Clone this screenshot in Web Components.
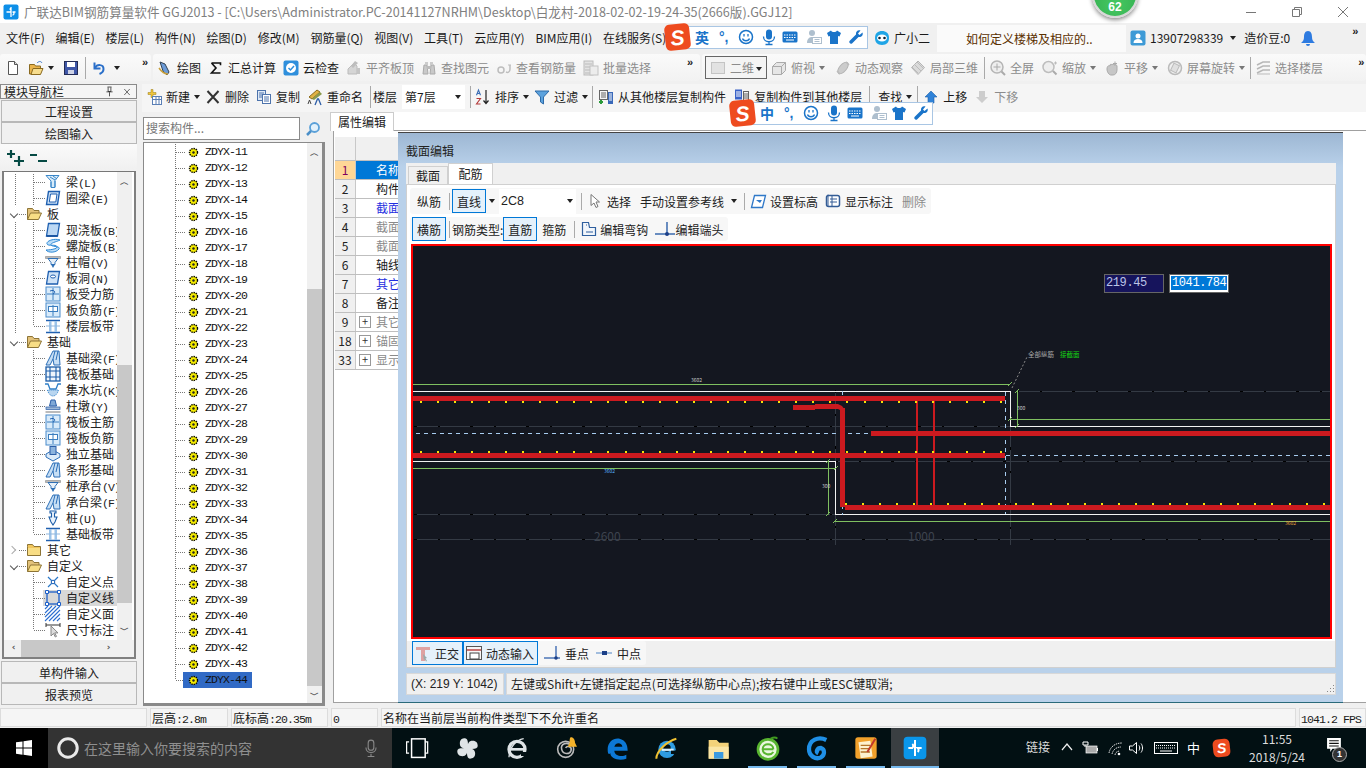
<!DOCTYPE html>
<html lang="zh">
<head>
<meta charset="utf-8">
<title>GGJ2013</title>
<style>
    html, body { margin: 0; padding: 0; }
    body { width: 1366px; height: 768px; overflow: hidden; font: 12px "Noto Sans CJK SC", "Liberation Sans", sans-serif; color: #1a1a1a; }
</style>
</head>
<body>
<gl-app>
    <gl-titlebar slot="title">广联达BIM钢筋算量软件 GGJ2013 - [C:\Users\Administrator.PC-20141127NRHM\Desktop\白龙村-2018-02-02-19-24-35(2666版).GGJ12]</gl-titlebar>

    <gl-menubar slot="menu"></gl-menubar>

    <gl-band slot="tools">
        <gl-group style="width:151px">
            <gl-tool icon="doc" style="margin-left:5px"></gl-tool>
            <gl-tool icon="open" arrow style="margin-left:7px"></gl-tool>
            <gl-tool icon="save" style="margin-left:9px"></gl-tool>
            <gl-sep style="margin-left:6px"></gl-sep>
            <gl-tool icon="undo" arrow style="margin-left:5px;--am:3px"></gl-tool>
            <gl-more style="margin-left:22px"></gl-more>
        </gl-group>
        <gl-group style="width:547px">
            <gl-tool icon="draw" style="margin-left:4px">绘图</gl-tool>
            <gl-tool icon="sigma" style="margin-left:7px">汇总计算</gl-tool>
            <gl-tool icon="cloud" style="margin-left:7px">云检查</gl-tool>
            <gl-tool icon="flat" dim style="margin-left:7px">平齐板顶</gl-tool>
            <gl-tool icon="binoc" dim style="margin-left:7px">查找图元</gl-tool>
            <gl-tool icon="glass" dim style="margin-left:7px">查看钢筋量</gl-tool>
            <gl-tool icon="batch" dim style="margin-left:7px">批量选择</gl-tool>
            <gl-more style="margin-left:36px"></gl-more>
        </gl-group>
        <gl-group style="flex:1">
            <gl-combo dim style="margin-left:3px;width:62px;border:1px solid #666;height:23px"><gl-icon name="square" style="margin:0 4px 0 2px"></gl-icon>二维</gl-combo>
            <gl-tool icon="cube" dim arrow style="margin-left:4px">俯视</gl-tool>
            <gl-tool icon="orbit" dim style="margin-left:10px">动态观察</gl-tool>
            <gl-tool icon="part" dim style="margin-left:7px">局部三维</gl-tool>
            <gl-sep style="margin-left:6px"></gl-sep>
            <gl-tool icon="full" dim style="margin-left:5px">全屏</gl-tool>
            <gl-tool icon="zoomin" dim arrow style="margin-left:8px">缩放</gl-tool>
            <gl-tool icon="pan" dim arrow style="margin-left:8px">平移</gl-tool>
            <gl-tool icon="rotate" dim arrow style="margin-left:9px">屏幕旋转</gl-tool>
            <gl-sep style="margin-left:5px"></gl-sep>
            <gl-tool icon="layers" dim style="margin-left:4px">选择楼层</gl-tool>
            <gl-more style="margin-left:35px"></gl-more>
        </gl-group>
    </gl-band>

    <gl-nav slot="nav">
        <gl-tree-row v1 v2 icon="t-beam">梁<b>(L)</b></gl-tree-row>
        <gl-tree-row v1 v2 icon="t-ring">圈梁<b>(E)</b></gl-tree-row>
        <gl-tree-row folder open>板</gl-tree-row>
        <gl-tree-row v1 v2 icon="t-slab">现浇板<b>(B)</b></gl-tree-row>
        <gl-tree-row v1 v2 icon="t-spiral">螺旋板<b>(B)</b></gl-tree-row>
        <gl-tree-row v1 v2 icon="t-cap">柱帽<b>(V)</b></gl-tree-row>
        <gl-tree-row v1 v2 icon="t-hole">板洞<b>(N)</b></gl-tree-row>
        <gl-tree-row v1 v2 icon="t-force">板受力筋</gl-tree-row>
        <gl-tree-row v1 v2 icon="t-neg">板负筋<b>(F)</b></gl-tree-row>
        <gl-tree-row v1 v2 last icon="t-strip">楼层板带</gl-tree-row>
        <gl-tree-row folder open>基础</gl-tree-row>
        <gl-tree-row v2 icon="t-fbeam">基础梁<b>(F)</b></gl-tree-row>
        <gl-tree-row v2 icon="t-raft">筏板基础</gl-tree-row>
        <gl-tree-row v2 icon="t-pit">集水坑<b>(K)</b></gl-tree-row>
        <gl-tree-row v2 icon="t-pier">柱墩<b>(Y)</b></gl-tree-row>
        <gl-tree-row v2 icon="t-force">筏板主筋</gl-tree-row>
        <gl-tree-row v2 icon="t-neg">筏板负筋</gl-tree-row>
        <gl-tree-row v2 icon="t-iso">独立基础</gl-tree-row>
        <gl-tree-row v2 icon="t-fbeam">条形基础</gl-tree-row>
        <gl-tree-row v2 icon="t-cap">桩承台<b>(V)</b></gl-tree-row>
        <gl-tree-row v2 icon="t-fbeam">承台梁<b>(F)</b></gl-tree-row>
        <gl-tree-row v2 icon="t-pile">桩<b>(U)</b></gl-tree-row>
        <gl-tree-row v2 last icon="t-strip">基础板带</gl-tree-row>
        <gl-tree-row folder>其它</gl-tree-row>
        <gl-tree-row folder open>自定义</gl-tree-row>
        <gl-tree-row v2 icon="t-point">自定义点</gl-tree-row>
        <gl-tree-row v2 selected icon="t-line">自定义线</gl-tree-row>
        <gl-tree-row v2 icon="t-face">自定义面</gl-tree-row>
        <gl-tree-row v2 last icon="t-dim">尺寸标注</gl-tree-row>
    </gl-nav>

    <gl-band slot="tools2" second>
        <gl-tool icon="new" arrow style="margin-left:4px">新建</gl-tool>
        <gl-tool icon="del" style="margin-left:5px">删除</gl-tool>
        <gl-tool icon="copy" style="margin-left:7px">复制</gl-tool>
        <gl-tool icon="rename" style="margin-left:7px">重命名</gl-tool>
        <gl-sep style="margin-left:7px"></gl-sep>
        <span style="margin-left:2px">楼层</span>
        <gl-combo style="margin-left:5px;width:63px;background:#fff;padding-left:3px">第7层</gl-combo>
        <gl-sep style="margin-left:5px"></gl-sep>
        <gl-tool icon="sort" arrow style="margin-left:4px">排序</gl-tool>
        <gl-tool icon="filter" arrow style="margin-left:5px">过滤</gl-tool>
        <gl-sep style="margin-left:4px"></gl-sep>
        <gl-tool icon="from" style="margin-left:5px">从其他楼层复制构件</gl-tool>
        <gl-tool icon="to" style="margin-left:8px">复制构件到其他楼层</gl-tool>
        <gl-sep style="margin-left:7px"></gl-sep>
        <gl-tool arrow style="margin-left:8px">查找</gl-tool>
        <gl-sep style="margin-left:5px"></gl-sep>
        <gl-tool icon="up" style="margin-left:5px">上移</gl-tool>
        <gl-tool icon="down" dim style="margin-left:7px">下移</gl-tool>
    </gl-band>

    <gl-list slot="list"></gl-list>
    <gl-props slot="props"></gl-props>

    <gl-status slot="status"></gl-status>
    <gl-taskbar slot="task"></gl-taskbar>

    <gl-dialog slot="over"></gl-dialog>
    <gl-ime slot="over" mode="英" style="left:665px;top:24px"></gl-ime>
    <gl-ime slot="over" mode="中" style="left:730px;top:100px"></gl-ime>
    <gl-score slot="over">62</gl-score>
</gl-app>

<script>
// shorthand, every element is the same shape: styles + markup in an open root
function define(name, css, html, init) {
    let template = document.createElement('template');
    template.innerHTML = `<style>${css}</style>${html}`;
    customElements.define(name, class extends HTMLElement {
        constructor() {
            super();
            this.attachShadow({ mode: 'open' });
            this.shadowRoot.appendChild(template.content.cloneNode(true));
        }
        connectedCallback() {
            if (init && !this.done) {
                this.done = true;
                init.call(this, this.shadowRoot);
            }
        }
    });
}

const ICONS = {
    doc: '<path d="M3.5 1.5h6l3 3v10h-9z" fill="#fff" stroke="#555"/><path d="M9.5 1.5v3h3" fill="#ddd" stroke="#555"/>',
    open: '<path d="M1.5 4.5h5l1 1.5h5v8h-11z" fill="#e9b44c" stroke="#8a6a20"/><path d="M3 14.5l2-6h10l-2.500 6z" fill="#f7dd8e" stroke="#8a6a20"/><path d="M9 3c2-2 4-2 5 0" fill="none" stroke="#3a77c8"/>',
    save: '<rect x="1.500" y="1.500" width="13" height="13" fill="#3f57a8" stroke="#232b55"/><rect x="4" y="2" width="8" height="5" fill="#fff"/><rect x="5" y="10" width="6" height="4" fill="#ced3e6"/>',
    undo: '<path d="M3.500 2.500v6h6" fill="none" stroke="#2a6fc9" stroke-width="2"/><path d="M4 8c2-4 8.500-4 8.500 1 0 2-1.500 4-4 5" fill="none" stroke="#2a6fc9" stroke-width="2"/>',
    draw: '<path d="M3 2l5 2 4 8-2 3-4-4z" fill="#6c9bd8" stroke="#345"/><path d="M2 8c2 3 5 6 9 6" fill="none" stroke="#c9a03c" stroke-width="1.500"/>',
    sigma: '<path d="M3.500 3h9v2.200M12.500 13h-9l4.500-5-4.500-5" fill="none" stroke="#111" stroke-width="1.600"/>',
    cloud: '<rect x="0.500" y="0.500" width="15" height="15" rx="2" fill="#2f8fdc"/><circle cx="8" cy="8" r="5" fill="#fff"/><path d="M5.500 8l2 2 3.500-4" fill="none" stroke="#2f8fdc" stroke-width="1.500"/>',
    flat: '<path d="M2 14V9l6-6 3 3v8z" fill="#d5d5d5" stroke="#bbb"/><path d="M11 14V8h3v6z" fill="#c4c4c4"/><path d="M9 1l3 2-5 5-2-2z" fill="#bdbdbd"/>',
    binoc: '<path d="M2 14l1-9h3l1 9zM9 14l1-9h3l1 9z" fill="#c9c9c9" stroke="#aaa"/><rect x="6" y="6" width="4" height="3" fill="#bbb"/><rect x="4" y="2" width="3" height="3" fill="#ccc"/><rect x="9" y="2" width="3" height="3" fill="#ccc"/>',
    glass: '<circle cx="5" cy="10" r="3" fill="none" stroke="#bdbdbd" stroke-width="1.500"/><path d="M10 12c2 1 4 0 4-3V5" fill="none" stroke="#bdbdbd" stroke-width="1.500"/><path d="M12 5h3" stroke="#bdbdbd"/>',
    batch: '<rect x="1" y="1" width="9" height="14" fill="#e3e3e3" stroke="#bbb"/><path d="M2 4h7M2 7h7M2 10h7M2 13h7" stroke="#bbb"/><rect x="7" y="6" width="8" height="9" fill="#ececec" stroke="#c2c2c2"/>',
    square: '<rect x="1.500" y="2.500" width="13" height="11" fill="#e2e2e2" stroke="#c4c4c4"/>',
    cube: '<path d="M1.500 6.500l4-4h9v8l-4 4h-9z" fill="#e6e6e6" stroke="#aaa"/><path d="M1.500 6.500h9v8M10.500 6.500l4-4" fill="none" stroke="#aaa"/>',
    orbit: '<ellipse cx="8" cy="8" rx="3.500" ry="7" transform="rotate(40 8 8)" fill="#ccc" stroke="#b4b4b4"/><path d="M2 11l3 3M11 2l3 3" stroke="#bbb" stroke-width="1.500"/>',
    part: '<path d="M8 1l6.500 6.500-6.500 7-6.500-7z" fill="#dadada" stroke="#b5b5b5"/><path d="M4 4l7 7M7 2l6 6M2 7l6 6" stroke="#bbb"/>',
    full: '<circle cx="7" cy="7" r="6" fill="#eee" stroke="#b5b5b5" stroke-width="1.500"/><path d="M7 3.500v7M3.500 7h7" stroke="#aaa"/><path d="M11.500 11.500l3.500 3.500" stroke="#aaa" stroke-width="2"/>',
    zoomin: '<circle cx="6.500" cy="7" r="5.500" fill="#eee" stroke="#bdbdbd" stroke-width="1.500"/><path d="M11 11l3.500 3.500" stroke="#aaa" stroke-width="2"/><path d="M12 3h3M13.500 1.500v3" stroke="#bbb"/>',
    pan: '<path d="M3 9c0-3 2-4 3-3V5c0-1 2-1 2 0 0-1 2-1 2 0 1-1 3 0 3 1v4c0 3-2 5-4 5H7c-2 0-4-3-4-6z" fill="#c6c6c6" stroke="#aaa"/><path d="M11 1.500v4M9 3.500h4" stroke="#aaa"/>',
    rotate: '<circle cx="8" cy="8" r="6.500" fill="#f0f0f0" stroke="#bbb" stroke-width="1.500"/><rect x="5" y="4" width="6" height="8" fill="#e0e0e0" stroke="#bbb" transform="rotate(25 8 8)"/>',
    layers: '<path d="M2 5l6-3h7M2 9l6-3h7M2 13l6-3h7" fill="none" stroke="#b7b7b7" stroke-width="1.500"/><path d="M2 14h13" stroke="#bbb"/>',
    new: '<path d="M5 0.500h2v3h3v2H7v3H5V5.500H2v-2h3z" fill="#f0c63c" stroke="#987a16" stroke-width=".5"/><rect x="6.500" y="7.500" width="9" height="8" fill="#fff" stroke="#5a7fb5"/><path d="M7 10.500h8M10 8v7M13 8v7" stroke="#5a7fb5"/>',
    del: '<path d="M2.500 2l11 12M13.500 2l-11 12" stroke="#333" stroke-width="2"/>',
    copy: '<rect x="1.500" y="1.500" width="8" height="10" fill="#dfe9f6" stroke="#4d73ac"/><path d="M3 4h5M3 6h5M3 8h5" stroke="#4d73ac"/><rect x="6.500" y="5.500" width="8" height="9" fill="#fff" stroke="#4d73ac"/><path d="M8 8h5M8 10h5M8 12h5" stroke="#4d73ac"/>',
    rename: '<path d="M2 8l8-7 3 2-8 7z" fill="#e0b243" stroke="#8b6a1a"/><path d="M5 10l8-7 2 2-8 6z" fill="#8a9a4c"/><path d="M8 16l2.500-6h1l2.500 6" fill="none" stroke="#2f5fa8" stroke-width="1.300"/><path d="M1 15l1.500-4 1.500 4" fill="none" stroke="#444"/>',
    sort: '<path d="M1.500 6.200L3.500 1l2 5.200M2.200 4.500h2.600" fill="none" stroke="#3a6db5" stroke-width="1.100"/><path d="M1.500 9.500h4l-4 5.500h4" fill="none" stroke="#b33a3a" stroke-width="1.100"/><path d="M11 1v13M8.500 11.500l2.500 3 2.500-3" fill="none" stroke="#222" stroke-width="1.200"/>',
    filter: '<path d="M1 2h14l-5.500 6v7l-3-2V8z" fill="#5ca2dd" stroke="#2d6aa8"/>',
    from: '<rect x="1.500" y="1.500" width="8" height="9" fill="#f5f5f5" stroke="#666"/><path d="M3 4h5M3 6h5M3 8h5" stroke="#666"/><path d="M3 11v4M1 13h4" stroke="#2c9a3b" stroke-width="2"/><rect x="10" y="3" width="5" height="12" fill="#3968b9"/><path d="M11 5h3M11 7h3M11 9h3M11 11h3" stroke="#fff"/>',
    to: '<rect x="1" y="0.500" width="7" height="10" fill="#3a63c8"/><path d="M2 3h5M2 5h5M2 7h5" stroke="#fff"/><rect x="9.500" y="2.500" width="5" height="9" fill="#f4f4f4" stroke="#666"/><path d="M10 5h4M10 7h4M10 9h4" stroke="#666"/>',
    up: '<path d="M8 2l6 6h-3v6H5V8H2z" fill="#2f82d8" stroke="#1d5fa8" stroke-width=".6"/>',
    down: '<path d="M8 14l-6-6h3V2h6v6h3z" fill="#cdcdcd"/>',
    cursor: '<path d="M4 1.500v11l3-2.500 2 4.500 2-1-2-4.500h3.500z" fill="#fff" stroke="#777"/>',
    slope: '<path d="M1.500 14.500l3-12h11l-3 12z" fill="#fff" stroke="#2f78c8" stroke-width="1.300"/><path d="M6 7h6l-2 3z" fill="#2f78c8"/>',
    note: '<rect x="1.500" y="2.500" width="13" height="11" rx="2" fill="#fff" stroke="#345d96" stroke-width="1.500"/><path d="M3 1.500v12M7 3v10" stroke="#345d96"/><path d="M5 6h7M5 9h7" stroke="#345d96"/>',
    hook: '<path d="M1.500 14.500v-13h6l1 5h6v8z" fill="#f2f6fb" stroke="#2f5f9e" stroke-width="1.200"/><path d="M5 4h1M5 11h7" stroke="#2f5f9e"/>',
    end: '<path d="M0 13h20" stroke="#2c5fa8" stroke-width="1.400"/><path d="M12 1v12" stroke="#2c5fa8" stroke-width="1.400"/><circle cx="12" cy="13" r="2" fill="#1c3f88"/>',
    perp: '<path d="M0 13h16" stroke="#3f6cb2" stroke-width="1.400"/><path d="M12 1v12" stroke="#3f6cb2" stroke-width="1.400"/><circle cx="12" cy="13" r="1.800" fill="#1c3f88"/>',
    mid: '<path d="M0 8h16" stroke="#8daed8" stroke-width="1.600"/><rect x="6" y="6" width="5" height="4" fill="#1c3f88"/>',
    ortho: '<path d="M1 2h14v3H10v11H6V5H1z" fill="#dfa2a2"/><path d="M8 9l4 4-1.500.5L12 16l-1 .5-1.200-2.300L9 15z" fill="#9aa"/>',
    dyn: '<rect x="0.500" y="1.500" width="15" height="13" fill="#f7f7f7" stroke="#555"/><path d="M1 5h14" stroke="#c87070" stroke-width="2"/><rect x="4" y="8" width="9" height="6" fill="#fff" stroke="#444"/>',
    gear: '<circle cx="5.500" cy="5.500" r="4" fill="#f7ee00" stroke="#000" stroke-dasharray="1.400 .9" stroke-width="1.400"/><circle cx="5.500" cy="5.500" r="1.200" fill="#222"/>',
    search: '<circle cx="9.500" cy="6.500" r="4.500" fill="#e3f1fb" stroke="#5aa0d8" stroke-width="1.800"/><path d="M6 10l-4 4" stroke="#4a8fc8" stroke-width="2.500"/>',
    folder: '<path d="M1.500 4.500v-2h5l1.500 2h6.500v9h-13z" fill="#f0c55c" stroke="#8d7436"/><path d="M2 6h12v7H2z" fill="#f8dd85"/>',
    folderopen: '<path d="M1.500 13.500v-11h5l1.500 2h5v3" fill="#e3c27a" stroke="#8d7436"/><path d="M1.500 13.500l3-6.500h11l-3 6.500z" fill="#f8dd85" stroke="#8d7436"/>',
    't-beam': '<path d="M1 1.500h13l-4 5v7H6V7z" fill="#d9ecfa" stroke="#3a87c9"/><path d="M5 3l5 3M8 2l4 3M6 8v5M10 7v6" stroke="#3a87c9"/>',
    't-ring': '<path d="M3.500 1.500h11l-2 13H1.500z" fill="#cfe3f7" stroke="#1e5fb0" stroke-width="1.400"/><path d="M5.500 4h6.500l-1.200 8H4.300z" fill="#fff" stroke="#1e5fb0"/>',
    't-slab': '<path d="M3.500 1.500h11l-2 12.500H1.500z" fill="#bcd8f4" stroke="#1e5fb0" stroke-width="1.300"/><path d="M1.500 14h11" stroke="#0f4a98" stroke-width="1.500"/>',
    't-spiral': '<path d="M15 2C9 0 1 3 2 6c1 2.500 9 0 10 2.500S5 12 1 12c2 3 10 3 13-1 2-3-7-2-8-4s5-3 9-5z" fill="#b9dcf8" stroke="#2f8ad6"/>',
    't-cap': '<path d="M0.500 2.500h15v2h-15z" fill="#bbb" stroke="#888" stroke-width=".6"/><path d="M3 4.500h10l-3 4v2H6v-2z" fill="#e6eff8" stroke="#2d6fb5"/><path d="M6 10.500h4L8 14z" fill="#2d6fb5"/>',
    't-hole': '<path d="M3.500 1.500h11l-2 12.500H1.500z" fill="#cfe3f7" stroke="#1e5fb0" stroke-width="1.300"/><ellipse cx="8" cy="6.500" rx="2.500" ry="1.500" fill="#fff" stroke="#1e5fb0"/>',
    't-force': '<rect x="1" y="1" width="14" height="14" fill="#d9ebfa" stroke="#4a8ccb"/><path d="M8 2v12M2 8h12" stroke="#3b7ec0"/><path d="M5 5c5-2 6 2 3 3" fill="none" stroke="#1e5fb0"/>',
    't-neg': '<rect x="1" y="1" width="14" height="14" fill="#d9ebfa" stroke="#4a8ccb"/><rect x="3.500" y="4.500" width="9" height="5" fill="#fff" stroke="#3b7ec0"/><path d="M8 3v11" stroke="#3b7ec0"/>',
    't-strip': '<path d="M1 2.500h14M1 14.500h14" stroke="#2060b0" stroke-width="1.400"/><rect x="4" y="3" width="2.500" height="11" fill="#9cc4ea"/><rect x="9.500" y="3" width="2.500" height="11" fill="#9cc4ea"/><path d="M1 8h14" stroke="#8fb6dd"/>',
    't-fbeam': '<path d="M8 1L14 1l1 14H9L8 9l-3 6H1z" fill="#c7dff5" stroke="#2c6fb8"/><path d="M10 1l-2 8M13 1l-2 9" stroke="#2c6fb8"/>',
    't-raft': '<rect x="1" y="1" width="14" height="14" fill="#eef5fc" stroke="#1c5da8" stroke-width="1.300"/><path d="M1 5h14M1 11h14M5 1v14M11 1v14" stroke="#1c5da8" stroke-width="1.100"/>',
    't-pit': '<path d="M0 2h3l2 5h6l2-5h3" fill="none" stroke="#2f7fc8" stroke-width="1.300"/><path d="M2.500 8c2 8 9 8 11 0z" fill="#b9d6f0" stroke="#2f7fc8" stroke-dasharray="1 1"/>',
    't-pier': '<path d="M6 2h4l1.500 6h-7z" fill="#7fa8d6" stroke="#2c5fa8"/><rect x="1" y="9" width="14" height="2.500" fill="#9db8d8" stroke="#2c5fa8" stroke-width=".7"/><rect x="0.500" y="13" width="15" height="2" fill="#bbb"/>',
    't-iso': '<path d="M1 8l7-4 7 4v3l-7 4-7-4z" fill="#dcebf9" stroke="#2c6fb8"/><rect x="5" y="0.500" width="6" height="8" fill="#8cb4de" stroke="#2c5fa8"/>',
    't-pile': '<path d="M5 1h6v2H9.500v4H12l-2 5-2 3-2-3-2-5h2.500V3H5z" fill="#e9f2fb" stroke="#1c5da8" stroke-width="1.100"/>',
    't-point': '<path d="M3 3l10 10M13 3L3 13" stroke="#2a78c8" stroke-width="1.200"/><circle cx="8" cy="8" r="1.800" fill="#fff" stroke="#1a5eb5"/>',
    't-line': '<rect x="2" y="2" width="12" height="12" fill="none" stroke="#1c5fc8" stroke-width="1.300"/><path d="M.5.500h3v3h-3zM12.500.500h3v3h-3zM.5 12.500h3v3h-3zM12.500 12.500h3v3h-3z" fill="#fff" stroke="#1c5fc8"/>',
    't-face': '<path d="M0 7L7 0M0 11L11 0M0 15L15 0M4 15L15 4M8 15l7-7M12 15l3-3M0 3l3-3" stroke="#2c6fd0" stroke-width="1.100"/>',
    't-dim': '<path d="M1 1v4M15 1v4M1 3h14" stroke="#333"/><path d="M6 4v10l2.500-2.500 1.800 3.500 1.200-.6-1.800-3.500H13z" fill="#ddd" stroke="#888"/>',
    win: '<path d="M0 2.300l6.500-.9v6.200H0zM7.500 1.300L16 0v7.600H7.500zM0 8.500h6.500v6.200L0 13.800zM7.500 8.500H16V16l-8.500-1.200z" fill="#fff"/>',
    cortana: '<circle cx="8" cy="8" r="6.700" fill="none" stroke="#e9e9e9" stroke-width="2.200"/>',
    mic: '<rect x="5.500" y="1" width="5" height="9" rx="2.500" fill="none" stroke="#888"/><path d="M3.500 7.500c0 6 9 6 9 0M8 13v2.500M5 15.500h6" fill="none" stroke="#888"/>',
    taskview: '<rect x="4.500" y="1.500" width="11" height="15" fill="none" stroke="#fff" stroke-width="1.200" transform="scale(.9)"/><path d="M2.500 4H0.500v9h2M15.500 4h2v9h-2" fill="none" stroke="#fff" transform="scale(.9)"/>',
    fan: '<path d="M9 9C5 9 3 8 3 5s2-4 4-4 3 3 2 8zM9 9c0-4 1-6 4-6s4 2 4 4-3 3-8 2zM9 9c4 0 6 1 6 4s-2 4-4 4-3-3-2-8zM9 9c0 4-1 6-4 6s-4-2-4-4 3-3 8-2z" fill="#dfe4e6"/>',
    ie: '<circle cx="9" cy="10" r="6" fill="none" stroke="#dfe4e6" stroke-width="2.500"/><path d="M3 10h12" stroke="#dfe4e6" stroke-width="2"/><path d="M14 2C8 3 3 9 3 16" fill="none" stroke="#dfe4e6"/><path d="M12 12h5v3h-5z" fill="#021013"/>',
    swirl: '<circle cx="8" cy="10" r="6" fill="none" stroke="#bbb" stroke-width="1.200"/><path d="M12 7c-3-3-8-1-7 3s6 4 7 1-3-4-4-2" fill="none" stroke="#bbb" stroke-width="1.200"/><path d="M12 1c2 0 3 2 3 4l1.500 3H9.500L11 5c0-2 0-4 1-4z" fill="#f4b22a"/>',
    edge: '<path d="M2 10C2 4 7 1 11 2c4 1 6 4 6 9H7c0 4 6 5 9 3v3c-5 2-12 0-12-4-1 1-2 1-2-3zM7 8h6c0-3-5-4-6 0z" fill="#0c78d6"/>',
    iec: '<circle cx="9" cy="10" r="6.500" fill="#2f9ce0"/><circle cx="9" cy="9" r="2.800" fill="#021013"/><rect x="5" y="9.500" width="9" height="1.700" fill="#d5edfb"/><rect x="12" y="11" width="5" height="2.500" fill="#021013"/><path d="M1 17c0-6 8-13 15-15" fill="none" stroke="#f1c232" stroke-width="1.500"/>',
    explorer: '<path d="M2 3h6l2 2h7v12H2z" fill="#f3d27a"/><path d="M2 8h15v9H2z" fill="#fbe6a6"/><rect x="6" y="12" width="7" height="5" fill="#3b9ae0"/>',
    greenie: '<circle cx="9" cy="10" r="7.500" fill="#eaf7df" stroke="#58b530" stroke-width="2"/><path d="M5 10h8M5 10c0-5 8-5 8 0M5 10c0 4 6 5 8 2" fill="none" stroke="#58b530" stroke-width="1.500"/><path d="M11 2c2-1 4-1 5 0" stroke="#3f9a20" fill="none" stroke-width="1.500"/>',
    glodon: '<path d="M16 3C10 0 3 3 3 10c0 5 5 8 9 6 3-2 3-6 0-7-3 0-4 3-2 4" fill="none" stroke="#1f8fe6" stroke-width="3.200"/>',
    notes: '<rect x="1" y="1" width="16" height="16" rx="2" fill="#f2a12b"/><rect x="4" y="4" width="9" height="12" fill="#fdf1cf" transform="rotate(-8 9 9)"/><path d="M5 7h7M5 9.500h7M5 12h7" stroke="#b5752a"/><path d="M10 12l6-10" stroke="#c0392b" stroke-width="1.500"/>',
    glodonapp: '<rect x="0.500" y="0.500" width="17" height="17" rx="3" fill="#0a96ea"/><path d="M9 3v12M4 9h3a2 2 0 0 0 0-3M14 9h-3a2 2 0 0 1 0 3" fill="none" stroke="#fff" stroke-width="1.500"/>',
    battery: '<path d="M1 2h5v3H1zM3 5v2" fill="none" stroke="#fff"/><rect x="4" y="6" width="11" height="7" fill="#aaa" stroke="#fff" stroke-width=".7"/><rect x="15" y="8" width="1" height="3" fill="#fff"/>',
    wifi: '<path d="M1 13C2 7 7 3 14 3M4 14c1-4 4-7 9-7M7 15c0-2 2-4 5-4" fill="none" stroke="#d8d8d8" stroke-dasharray="1.500 .8"/><circle cx="11" cy="14" r="1.300" fill="#fff"/>',
    speaker: '<path d="M1.500 6h3l4-3.500v11l-4-3.500h-3z" fill="none" stroke="#fff"/><path d="M11 5.500c1 1.500 1 3.500 0 5M13 3.500c2 2.500 2 6.500 0 9" fill="none" stroke="#fff"/>',
    kbd: '<rect x="0.500" y="2.500" width="23" height="11" fill="none" stroke="#fff"/><path d="M2 5.500h20M2 8h20" stroke="#fff" stroke-dasharray="1 1"/><path d="M6 11h12" stroke="#fff"/>',
    actions: '<path d="M1 1h13v10H6l-2 3v-3H1z" fill="#fff"/><path d="M3 3.500h9M3 6h9M3 8.500h9" stroke="#111"/>',
    smile: '<circle cx="8" cy="8" r="6.500" fill="#fff" stroke="#1a74c9" stroke-width="1.500"/><path d="M4.500 9.500c1 3 6 3 7 0" fill="none" stroke="#1a74c9" stroke-width="1.300"/><path d="M6 5v2.500M10 5v2.500" stroke="#1a74c9" stroke-width="1.300"/>',
    vmic: '<rect x="5" y="0.500" width="6" height="10" rx="3" fill="#1a74c9"/><path d="M2.500 7.500c0 7 11 7 11 0M8 13v2.500M4.500 15.500h7" fill="none" stroke="#1a74c9" stroke-width="1.300"/>',
    keys: '<rect x="0.500" y="2.500" width="15" height="11" rx="1.500" fill="#1a74c9"/><path d="M2 6h12M2 8.500h12" stroke="#fff" stroke-dasharray="1.500 1"/><path d="M4 11h8" stroke="#fff"/>',
    card: '<circle cx="6" cy="4" r="3" fill="#aebfce"/><path d="M1 14c0-5 3-6 5-6h4v6z" fill="#aebfce"/><rect x="6.500" y="8.500" width="9" height="6" fill="#fff" stroke="#aebfce"/><path d="M8.500 10.500h5M8.500 12.500h5" stroke="#aebfce"/>',
    shirt: '<path d="M5 1.500L1 4l1.500 3.500L4 7v8h8V7l1.500.5L15 4l-4-2.500C10 3.500 6 3.500 5 1.500z" fill="#1a74c9"/>',
    wrench: '<path d="M14.500 3.500L11.500 6 10 4.500l2.500-3C10 .5 7.500 2.500 8 5.500L1.500 12c-1 1.500 1 3.500 2.500 2.500L10.500 8c3 .5 5-2 4-4.500z" fill="#1a74c9"/>',
    avatar: '<rect x="0.500" y="0.500" width="15" height="15" rx="2" fill="#3d9ad6"/><circle cx="8" cy="6" r="2.500" fill="#fff"/><path d="M3.500 13c0-3 2-4 4.500-4s4.500 1 4.500 4z" fill="#fff"/>',
    bell: '<path d="M8 1c3 0 4 3 4 6s1 4 3 6H1c2-2 3-3 3-6s1-6 4-6z" fill="#2e7be0"/><path d="M6 14h4a2 2 0 0 1-4 0z" fill="#2e7be0"/>',
    robot: '<path d="M8 1c4 0 7 2 7 7 0 4-2 7-7 7s-7-3-7-7c0-5 3-7 7-7z" fill="#1fa5e6"/><ellipse cx="8" cy="8" rx="5" ry="3.500" fill="#fff"/><circle cx="5.500" cy="8" r="1.300" fill="#123"/><circle cx="10.500" cy="8" r="1.300" fill="#123"/>',
    pin: '<path d="M5 1.500h6M6 2v6h4V2M3.500 8.500h9M8 9v6" fill="none" stroke="#222" stroke-width="1.100"/>',
    glapp: '<rect x="0.500" y="0.500" width="15" height="15" rx="2" fill="#0d8fe8"/><path d="M8 3v10M3.500 8h3a1.500 1.500 0 0 0 0-3M12.500 8h-3a1.500 1.500 0 0 1 0 3" fill="none" stroke="#fff" stroke-width="1.300"/>'
};

define('gl-icon', ':host{display:inline-block;width:16px;height:16px;flex:none;line-height:0} svg{width:100%;height:100%;overflow:visible}', '<svg viewBox="0 0 16 16"></svg>', function (root) {
    let svg = root.querySelector('svg');
    let box = this.getAttribute('box');
    if (box) svg.setAttribute('viewBox', box);
    svg.innerHTML = ICONS[this.getAttribute('name')] || '';
});

define('gl-app', `
    :host{display:grid;position:relative;width:1366px;height:768px;overflow:hidden;background:#f0f0f0;
        grid-template-columns:137px 1fr;grid-template-rows:23px 31px 27px 3px 28px 594px 22px 40px}
    .a{grid-column:1/3} .t1{grid-column:1/3;grid-row:3}
    .nav{grid-row:5/7;grid-column:1}
    .t2{grid-row:5;grid-column:2;padding-left:5px}
    .work{grid-row:6;grid-column:2;display:flex;padding-left:5px;min-width:0}
    .s{grid-column:1/3;grid-row:7} .k{grid-column:1/3;grid-row:8}
`, `
    <div class="a" style="grid-row:1"><slot name="title"></slot></div>
    <div class="a" style="grid-row:2"><slot name="menu"></slot></div>
    <div class="t1"><slot name="tools"></slot></div>
    <div class="nav"><slot name="nav"></slot></div>
    <div class="t2"><slot name="tools2"></slot></div>
    <div class="work"><slot name="list"></slot><slot name="props"></slot></div>
    <div class="s"><slot name="status"></slot></div>
    <div class="k"><slot name="task"></slot></div>
    <slot name="over"></slot>
`);

define('gl-titlebar', `
    :host{display:flex;align-items:center;height:23px;background:#fff;color:#808080;font-size:12.600px;white-space:nowrap}
    gl-icon{margin:0 5px 0 3px}
    .text{flex:1;overflow:hidden}
    .c{width:46px;height:23px;display:flex;align-items:center;justify-content:center}
    svg{width:10px;height:10px}
`, `
    <gl-icon name="glapp"></gl-icon><div class="text"><slot></slot></div>
    <div class="c"><svg viewBox="0 0 10 10"><path d="M0 5.500h10" stroke="#777"/></svg></div>
    <div class="c"><svg viewBox="0 0 10 10"><path d="M.5 2.500h7v7h-7zM2.500 2V.5h7v7H8" fill="none" stroke="#777"/></svg></div>
    <div class="c"><svg viewBox="0 0 10 10"><path d="M0 0l10 10M10 0L0 10" stroke="#777"/></svg></div>
`);

const MENUS = ['文件(F)', '编辑(E)', '楼层(L)', '构件(N)', '绘图(D)', '修改(M)', '钢筋量(Q)', '视图(V)', '工具(T)', '云应用(Y)', 'BIM应用(I)', '在线服务(S)'];

define('gl-menubar', `
    :host{display:flex;align-items:center;height:31px;background:#f0f0f0;position:relative;padding-bottom:2px;box-sizing:border-box}
    .m{display:flex;gap:10.800px;padding-left:6px;width:660px;overflow:hidden;white-space:nowrap;flex:none}
    .r{display:flex;align-items:center;margin-left:208px;white-space:nowrap;height:100%}
    .tip{width:189px;height:27px;background:#fafafa;color:#5a3000;display:flex;align-items:center;padding-left:29px;box-sizing:border-box;margin:0 4px 0 7px;align-self:flex-start;margin-top:2px}
    i{width:0;height:0;border:3px solid transparent;border-top:4px solid #222;border-bottom:0;display:inline-block;margin:0 8px 0 7px}
`, `
    <div class="m"></div>
    <div class="r">
        <gl-icon name="robot"></gl-icon><span style="margin-left:4px">广小二</span>
        <div class="tip">如何定义楼梯及相应的..</div>
        <gl-icon name="avatar"></gl-icon><span style="margin-left:4px">13907298339</span><i></i>
        <span>造价豆:0</span><gl-icon name="bell" style="margin-left:10px"></gl-icon>
        <gl-more style="margin-left:36px"></gl-more>
    </div>
`, function (root) {
    root.querySelector('.m').innerHTML = MENUS.map((m) => `<span>${m}</span>`).join('');
});

define('gl-band', `
    :host{display:flex;align-items:center;height:27px;gap:2px}
    :host([second]){height:28px;background:#f5f5f5;gap:0;white-space:nowrap;box-sizing:border-box;padding-bottom:3px}
`, '<slot></slot>');

define('gl-group', ':host{display:flex;align-items:center;height:27px;background:linear-gradient(#fafafa,#f2f2f2);border-radius:3px;flex:none;box-sizing:border-box;min-width:0;white-space:nowrap}', '<slot></slot>');

define('gl-tool', `
    :host{display:inline-flex;align-items:center;gap:4px;white-space:nowrap;flex:none}
    :host([dim]){color:#8c8c8c}
    i{display:none;width:0;height:0;border:3px solid transparent;border-top:4px solid #222;border-bottom:0;margin-left:var(--am,0)}
    :host([dim]) i{border-top-color:#777}
    :host([arrow]) i{display:block}
`, '<gl-icon></gl-icon><slot></slot><i></i>', function (root) {
    let name = this.getAttribute('icon');
    let icon = root.querySelector('gl-icon');
    if (name) {
        icon.setAttribute('name', name);
        icon.shadowRoot.querySelector('svg').innerHTML = ICONS[name];
    } else {
        icon.style.display = 'none';
    }
});

define('gl-sep', ':host{display:block;width:1px;height:22px;background:#a9a9a9;flex:none}', '');

define('gl-more', `:host{display:inline-block;font:bold 11px "Liberation Sans",sans-serif;line-height:10px;align-self:flex-start;margin-top:3px;color:#222}`, '»');

define('gl-combo', `
    :host{display:inline-flex;align-items:center;height:24px;padding-left:2px;box-sizing:border-box;position:relative;flex:none}
    :host([dim]){color:#8c8c8c;background:#f4f4f4}
    i{position:absolute;right:4px;top:10px;border:3px solid transparent;border-top:4px solid #222;border-bottom:0}
`, '<slot></slot><i></i>');

define('gl-nav', `
    :host{display:flex;flex-direction:column;height:622px;width:137px;background:#f0f0f0;box-sizing:border-box;color:#222}
    .head{height:15px;border:1px solid #8a8a8a;display:flex;align-items:center;padding:0 3px;background:#f5f5f5;line-height:13px;margin-bottom:1px;box-sizing:border-box;flex:none}
    .head span{flex:1}
    .b{height:22px;flex:none;display:flex;align-items:center;justify-content:center;border:1px solid #b8b8b8;box-sizing:border-box;background:#f0f0f0;margin:0 0 0 1px}
    .plus{height:27px;flex:none;display:flex;align-items:center;gap:6px;padding-left:7px;background:linear-gradient(#fafafa,#f0f0f0)}
    .box{flex:1;border:1px solid #808080;border-width:1px 2px 2px 2px;margin:0 1px 2px 2px;background:#fff;position:relative;overflow:hidden;min-height:0;display:flex;flex-direction:column;border-top:1px solid #777}
    .rows{height:469px;width:113px;overflow:hidden;padding-top:2px;box-sizing:border-box}
    .v{position:absolute;right:2px;top:0;width:15px;height:469px;background:#f0f0f0}
    .v u{position:absolute;left:0;top:193px;width:15px;height:238px;background:#c8c8c8}
    .hs{height:17px;background:#f0f0f0;position:relative;flex:none}
    .hs u{position:absolute;left:17px;top:0;width:59px;height:17px;background:#c8c8c8}
    .ch{position:absolute;color:#555;font:bold 9px "DejaVu Sans",sans-serif;width:15px;text-align:center}
`, `
    <div class="head"><span>模块导航栏</span><gl-icon name="pin" style="width:11px;height:11px;margin-right:8px"></gl-icon><gl-icon name="del" style="width:8px;height:8px;margin-right:2px;opacity:.7"></gl-icon></div>
    <div class="b">工程设置</div>
    <div class="b">绘图输入</div>
    <div class="plus">
        <svg width="17" height="16" viewBox="0 0 17 16"><path d="M4 0v8M0 4h8M12 6v10M7 11h10" stroke="#064a44" stroke-width="2.200"/></svg>
        <svg width="17" height="12" viewBox="0 0 17 12"><path d="M0 3h7M8 9h9" stroke="#064a44" stroke-width="2.200"/></svg>
    </div>
    <div class="box">
        <div class="rows"><slot></slot></div>
        <div class="v"><u></u><div class="ch" style="top:4px">︿</div><div class="ch" style="top:452px">﹀</div></div>
        <div class="hs"><u></u><div class="ch" style="left:2px;top:2px">‹</div><div class="ch" style="left:97px;top:2px">›</div></div>
    </div>
    <div class="b">单构件输入</div>
    <div class="b" style="margin-bottom:1px">报表预览</div>
`);

define('gl-tree-row', `
    :host{display:flex;align-items:center;height:16px;position:relative;white-space:nowrap;padding-left:62px;font-size:12px;line-height:16px;--dot:repeating-linear-gradient(#777 0 1px,transparent 1px 2px)}
    :host([folder]){padding-left:43px}
    .v1,.v2{position:absolute;top:0;bottom:0;width:1px;background:var(--dot);display:none}
    .v1{left:11px}.v2{left:29px}
    :host([v1]) .v1,:host([v2]) .v2{display:block}
    :host([last]) .v2{bottom:8px}
    .h{position:absolute;left:30px;top:8px;width:11px;height:1px;background:repeating-linear-gradient(90deg,#777 0 1px,transparent 1px 2px)}
    :host([folder]) .h{left:15px;width:7px}
    gl-icon{position:absolute;left:41px;top:0;width:16px;height:16px}
    :host([folder]) gl-icon{left:22px}
    .chev{display:none;position:absolute;left:7px;top:5px;width:5px;height:5px;border:solid #555;border-width:0 1.500px 1.500px 0;transform:rotate(45deg)}
    :host([folder]) .chev{display:block}
    :host([folder]:not([open])) .chev{transform:rotate(-45deg);left:5px;top:5px;border-color:#aaa}
    .sel{display:none;position:absolute;left:39px;right:0;top:0;height:16px;background:#d8d8d8}
    :host([selected]) .sel{display:block}
    .t{position:relative}
    ::slotted(b){font:11.500px "Liberation Mono",monospace;letter-spacing:-.9px;color:#222}
`, `
    <div class="sel"></div><div class="v1"></div><div class="v2"></div><div class="h"></div><div class="chev"></div>
    <gl-icon></gl-icon><span class="t"><slot></slot></span>
`, function (root) {
    let icon = root.querySelector('gl-icon');
    let name = this.hasAttribute('folder') ? (this.hasAttribute('open') ? 'folderopen' : 'folder') : this.getAttribute('icon');
    icon.shadowRoot.querySelector('svg').innerHTML = ICONS[name];
});

define('gl-list', `
    :host{display:flex;flex-direction:column;width:183px;height:594px;flex:none}
    .search{height:23px;margin:5px 0 2px 1px;display:flex}
    .search div{flex:1;background:#fff;border:1px solid #8a8a8a;box-sizing:border-box;color:#777;padding-left:2px;line-height:19px}
    .search span{width:25px;display:flex;align-items:center;justify-content:center}
    .box{flex:1;margin-left:1px;border:1px solid #8a8a8a;border-bottom-width:3px;border-right-width:3px;background:#fff;position:relative;overflow:hidden;box-sizing:border-box}
    .rows{padding-top:1px}
    .r{height:16px;position:relative;padding-left:61px;font:11.500px/16px "Liberation Mono",monospace;letter-spacing:-.9px;color:#111}
    .r::before{content:"";position:absolute;left:31px;top:0;bottom:0;width:1px;background:repeating-linear-gradient(#777 0 1px,transparent 1px 2px)}
    .r:last-child::before{bottom:8px}
    .r::after{content:"";position:absolute;left:32px;top:8px;width:10px;height:1px;background:repeating-linear-gradient(90deg,#777 0 1px,transparent 1px 2px)}
    .r gl-icon{position:absolute;left:44px;top:3px;width:11px;height:11px}
    .r.on::after{width:7px}
    .r .s{position:absolute;left:39px;top:0;width:69px;height:16px;background:#316ac5}
    .r span{position:relative}
    .v{position:absolute;right:0;top:0;bottom:0;width:15px;background:#f0f0f0}
    .v u{position:absolute;left:0;top:146px;right:0;height:397px;background:#c8c8c8}
    .ch{position:absolute;left:0;width:15px;text-align:center;color:#555;font:bold 9px "DejaVu Sans",sans-serif}
`, `
    <div class="search"><div>搜索构件...</div><span><gl-icon name="search"></gl-icon></span></div>
    <div class="box"><div class="rows"></div><div class="v"><u></u><div class="ch" style="top:4px">︿</div><div class="ch" style="top:546px">﹀</div></div></div>
`, function (root) {
    let out = '';
    for (let n = 11; n <= 44; n++) {
        let on = n === 44;
        out += `<div class="r${on ? ' on' : ''}">${on ? '<div class="s"></div>' : ''}<gl-icon name="gear"></gl-icon><span>ZDYX-${n}</span></div>`;
    }
    root.querySelector('.rows').innerHTML = out;
    root.querySelectorAll('.r gl-icon').forEach((i) => i.shadowRoot.querySelector('svg').setAttribute('viewBox', '0 0 11 11'));
});

const PROPS = [
    ['1', '名称', 'on'], ['2', '构件', ''], ['3', '截面', 'blue'], ['4', '截面', 'gray'], ['5', '截面', 'gray'], ['6', '轴线', ''],
    ['7', '其它', 'blue'], ['8', '备注', ''], ['9', '其它', 'gray plus'], ['18', '锚固', 'gray plus'], ['33', '显示', 'gray plus']
];

define('gl-props', `
    :host{display:block;flex:1;margin-left:5px;min-width:0;position:relative}
    .tab{position:absolute;left:0;top:0;width:62px;height:18px;background:#fff;border:1px solid #ccc;border-bottom:0;text-align:center;line-height:18px;box-sizing:content-box;z-index:1}
    .top{height:18px;background:#fff}
    .panel{position:absolute;left:3px;right:0;top:18px;bottom:3px;background:#fff;border:1px solid #a0a0a0;border-right:0;padding-top:6px}
    .row{display:flex;height:19px;box-sizing:border-box;border-bottom:1px solid #bfbfbf;margin-left:1px;width:400px}
    .row.h{height:24px;background:#f0f0f0}
    .n{width:20px;background:#f0f0f0;text-align:center;border-right:1px solid #c8c8c8;line-height:18px;flex:none;color:#222}
    .c{padding-left:20px;flex:1;line-height:18px;position:relative}
    .on .n{background:#ffd796;color:#800060}
    .on .c{background:#0078d7;color:#fff}
    .blue .c{color:#1f2fe0}
    .gray .c{color:#8a8a8a}
    .plus .c::before{content:"+";position:absolute;left:3px;top:3px;width:10px;height:10px;border:1px solid #999;line-height:9px;text-align:center;color:#333;padding-left:0;font-size:11px}
`, `
    <div class="top"></div><div class="tab">属性编辑</div>
    <div class="panel"><div class="row h"><div class="n"></div><div class="c"></div></div><div class="rows"></div></div>
`, function (root) {
    root.querySelector('.rows').innerHTML = PROPS.map((p) => `<div class="row ${p[2]}"><div class="n">${p[0]}</div><div class="c">${p[1]}</div></div>`).join('');
});

define('gl-status', `
    :host{display:flex;height:22px;padding:2px 0 1px;box-sizing:border-box;gap:3px;background:#f0f0f0}
    div{background:#f5f5f5;border:1px solid #dcdcdc;box-sizing:border-box;padding-left:1px;line-height:17px;white-space:nowrap;height:19px}
    b{font:11.500px "Liberation Mono",monospace;letter-spacing:-.9px;font-weight:400}
`, `
    <div style="width:147px"></div>
    <div style="width:78px">层高<b>:2.8m</b></div>
    <div style="width:97px">底标高<b>:20.35m</b></div>
    <div style="width:47px"><b>0</b></div>
    <div style="flex:1">名称在当前层当前构件类型下不允许重名</div>
    <div style="width:67px"><b>1041.2 FPS</b></div>
`);

define('gl-taskbar', `
    :host{display:flex;height:40px;background:#021013;color:#fff;align-items:center;position:relative}
    .start{width:48px;height:40px;background:#000;display:flex;align-items:center;justify-content:center}
    .search{width:344px;height:40px;background:#333;display:flex;align-items:center;color:#8f8f8f;font-size:14px;flex:none}
    .apps{display:flex;height:40px;margin-left:0}
    .a{width:50px;height:40px;display:flex;align-items:center;justify-content:center;position:relative}
    .a.run::after{content:"";position:absolute;left:5px;right:5px;bottom:0;height:2px;background:#76b9ed}
    .a.act{background:#3a3f42}
    .a.act::after{left:0;right:0}
    .tray{position:absolute;right:0;top:0;height:40px;left:1026px;font-size:12px;color:#ddd}
    .tray > *{position:absolute}
    .clock{left:221px;width:60px;text-align:center;line-height:18px;top:2px;color:#ddd}
    .badge{left:306px;top:19px;width:13px;height:13px;border-radius:50%;background:#333;border:1px solid #aaa;color:#fff;font:bold 9px/13px "Liberation Sans",sans-serif;text-align:center}
`, `
    <div class="start"><gl-icon name="win"></gl-icon></div>
    <div class="search"><gl-icon name="cortana" style="width:22px;height:22px;margin:0 5px 0 9px"></gl-icon>在这里输入你要搜索的内容<gl-icon name="mic" style="margin-left:110px;width:18px;height:20px"></gl-icon></div>
    <div class="apps">
        <div class="a"><gl-icon name="taskview" box="0 0 16 16" style="width:22px;height:22px"></gl-icon></div>
        <div class="a"><gl-icon name="fan" box="0 0 18 18" style="width:23px;height:23px"></gl-icon></div>
        <div class="a"><gl-icon name="ie" box="0 0 18 18" style="width:24px;height:24px"></gl-icon></div>
        <div class="a"><gl-icon name="swirl" box="0 0 18 18" style="width:24px;height:24px"></gl-icon></div>
        <div class="a"><gl-icon name="edge" box="0 0 18 18" style="width:24px;height:24px"></gl-icon></div>
        <div class="a"><gl-icon name="iec" box="0 0 18 18" style="width:24px;height:24px"></gl-icon></div>
        <div class="a" style="width:51px"><gl-icon name="explorer" box="0 0 18 18" style="width:24px;height:24px"></gl-icon></div>
        <div class="a run" style="width:49px"><gl-icon name="greenie" box="0 0 18 18" style="width:24px;height:24px"></gl-icon></div>
        <div class="a run" style="width:49px"><gl-icon name="glodon" box="0 0 18 18" style="width:24px;height:24px"></gl-icon></div>
        <div class="a run" style="width:49px"><gl-icon name="notes" box="0 0 18 18" style="width:24px;height:24px"></gl-icon></div>
        <div class="a run act" style="width:48px;margin-left:1px"><gl-icon name="glodonapp" box="0 0 18 18" style="width:24px;height:24px"></gl-icon></div>
    </div>
    <div class="tray">
        <span style="left:0;top:10px">链接</span>
        <svg style="left:35px;top:15px" width="12" height="8" viewBox="0 0 12 8"><path d="M1 7l5-6 5 6" fill="none" stroke="#eee" stroke-width="1.200"/></svg>
        <gl-icon name="battery" style="left:56px;top:12px"></gl-icon>
        <gl-icon name="wifi" style="left:82px;top:12px"></gl-icon>
        <gl-icon name="speaker" style="left:102px;top:12px"></gl-icon>
        <gl-icon name="kbd" box="0 0 24 16" style="left:128px;top:12px;width:24px"></gl-icon>
        <span style="left:161px;top:10px;font-size:13px;color:#fff">中</span>
        <span style="left:187px;top:11px"><gl-slogo style="width:17px;height:18px;font-size:14px"></gl-slogo></span>
        <div class="clock">11:55<br>2018/5/24</div>
        <gl-icon name="actions" style="left:300px;top:9px;width:17px;height:17px"></gl-icon>
        <div class="badge">1</div>
    </div>
`, function (root) {
    root.querySelectorAll('gl-icon[box]').forEach((i) => i.shadowRoot.querySelector('svg').setAttribute('viewBox', i.getAttribute('box')));
});

define('gl-slogo', `
    :host{display:inline-flex;width:25px;height:26px;background:#ee4b1f;color:#fff;border-radius:5px;align-items:center;justify-content:center;
        font:italic 900 21px/1 "Liberation Sans",sans-serif;transform:rotate(-6deg);flex:none}
`, 'S');

define('gl-ime', `
    :host{position:absolute;display:flex;align-items:center;height:26px;z-index:5}
    .bar{display:flex;align-items:center;height:23px;width:185px;background:#fff;border:1px solid #a9c6e4;box-sizing:border-box;margin-left:-7px;padding:0 0 0 11px;color:#1a74c9;font-weight:700;font-size:14px}
    gl-slogo{z-index:1}
    .d{font:bold 14px "Liberation Sans",sans-serif;width:10px;margin:0 9px 0 10px;white-space:nowrap}
`, `
    <gl-slogo></gl-slogo>
    <div class="bar">
        <span class="mode"></span><span class="d">°,</span>
        <gl-icon name="smile"></gl-icon><gl-icon name="vmic" style="margin-left:7px"></gl-icon><gl-icon name="keys" style="margin-left:5px"></gl-icon><gl-icon name="card" style="margin-left:8px"></gl-icon><gl-icon name="shirt" style="margin-left:4px"></gl-icon><gl-icon name="wrench" style="margin-left:6px"></gl-icon>
    </div>
`, function (root) {
    root.querySelector('.mode').textContent = this.getAttribute('mode');
});

define('gl-score', `
    :host{position:absolute;left:1092px;top:-28px;width:46px;height:46px;border-radius:50%;background:radial-gradient(circle at 50% 70%,#45c862,#2fa84a);border:2px solid #d8d8d8;box-sizing:border-box;
        box-shadow:0 2px 4px rgba(0,0,0,.45);color:#fff;font:bold 12px/1 "Liberation Sans",sans-serif;display:flex;align-items:flex-end;justify-content:center;padding-bottom:3px;z-index:6}
`, '<slot></slot>');

define('gl-dbtn', `
    :host{display:inline-flex;align-items:center;justify-content:center;gap:3px;height:24px;white-space:nowrap;box-sizing:border-box;flex:none}
    :host([on]){border:1px solid #0078d7;background:#e5f1fb}
    :host([lead]){justify-content:flex-start;padding-left:2px;gap:4px}
`, '<slot></slot>');

define('gl-dialog', `
    :host{position:absolute;left:398px;top:132px;width:945px;height:571px;box-sizing:border-box;background:linear-gradient(#9db7d3,#b9d1ea 34px);border-top:1px solid #444;border-bottom:1px solid #2a6a7a;padding:0 7px 0 8px;display:flex;flex-direction:column;z-index:3;font-size:12px;color:#222}
    .cap{height:30px;padding:8px 0 0;flex:none;box-sizing:border-box;line-height:20px;color:#222}
    .tabs{height:21px;display:flex;align-items:flex-end;background:#f0f0f0;padding-left:2px;flex:none}
    .tabs div{height:18px;width:40px;text-align:center;border:1px solid #d0d0d0;border-bottom:0;line-height:18px;box-sizing:border-box}
    .tabs .on{height:21px;width:45px;background:#fff;line-height:20px}
    .page{height:484px;background:#fff;border:1px solid #d0d0d0;flex:none;padding:3px 3px 0;box-sizing:border-box;display:flex;flex-direction:column}
    .bar{display:flex;align-items:center;height:26px;background:#f7f7f7;flex:none;width:max-content;white-space:nowrap;border-radius:3px}
    .b2{margin-top:3px;height:24px}
    .sep{width:1px;height:17px;background:#aaa;flex:none}
    gl-icon{flex:none}
    i{width:0;height:0;border:3px solid transparent;border-top:4px solid #222;border-bottom:0;flex:none}
    .combo{width:77px;height:25px;background:#fff;margin:0 0 0 4px;display:flex;align-items:center;padding-left:2px;box-sizing:border-box;position:relative;font:12.500px "Liberation Sans",sans-serif}
    .combo i{position:absolute;right:3px;top:10px}
    .bottom{background:#f0f0f0;margin:2px -3px 0;padding-left:5px;flex:1;display:flex;align-items:flex-start}
    .foot{display:flex;gap:2px;height:22px;margin-top:5px;flex:none}
    .foot div{background:#f0f0f0;border:1px solid #d8d8d8;box-sizing:border-box;line-height:20px;padding-left:4px;height:22px;white-space:nowrap;position:relative}
    .foot svg{position:absolute;right:0;bottom:0}
    .dim{color:#8a8a8a}
`, `
    <div class="cap">截面编辑</div>
    <div class="tabs"><div>截面</div><div class="on">配筋</div></div>
    <div class="page">
        <div class="bar">
            <span style="margin:0 8px 0 7px">纵筋</span><div class="sep"></div>
            <gl-dbtn on style="width:34px;margin-left:2px">直线</gl-dbtn><i style="margin-left:3px"></i>
            <div class="combo">2C8<i></i></div>
            <div class="sep" style="margin-left:5px"></div>
            <gl-icon name="cursor" style="margin-left:5px"></gl-icon><span style="margin-left:4px">选择</span>
            <span style="margin-left:9px">手动设置参考线</span><i style="margin-left:7px"></i>
            <div class="sep" style="margin-left:7px"></div>
            <gl-icon name="slope" style="margin-left:5px"></gl-icon><span style="margin-left:4px">设置标高</span>
            <gl-icon name="note" style="margin-left:7px"></gl-icon><span style="margin-left:4px">显示标注</span>
            <span class="dim" style="margin:0 5px 0 9px">删除</span>
        </div>
        <div class="bar b2">
            <gl-dbtn on style="width:34px;margin-left:2px">横筋</gl-dbtn><div class="sep" style="margin-left:3px"></div>
            <span style="margin-left:2px">钢筋类型:</span>
            <gl-dbtn on style="width:34px">直筋</gl-dbtn><span style="margin-left:5px">箍筋</span>
            <div class="sep" style="margin-left:8px"></div>
            <gl-icon name="hook" style="margin-left:6px"></gl-icon><span style="margin-left:3px">编辑弯钩</span>
            <gl-icon name="end" style="margin-left:7px;width:20px;height:16px"></gl-icon><span style="margin:0 5px 0 0">编辑端头</span>
        </div>
        <gl-canvas style="margin-top:3px;margin-left:1px"></gl-canvas>
        <div class="bottom">
            <div class="bar" style="height:24px">
                <gl-dbtn on lead style="width:51px"><gl-icon name="ortho"></gl-icon>正交</gl-dbtn>
                <gl-dbtn on lead style="width:75px"><gl-icon name="dyn"></gl-icon>动态输入</gl-dbtn>
                <gl-icon name="perp" style="margin-left:6px"></gl-icon><span style="margin-left:5px">垂点</span>
                <gl-icon name="mid" style="margin-left:7px"></gl-icon><span style="margin:0 5px 0 5px">中点</span>
            </div>
        </div>
    </div>
    <div class="foot">
        <div style="width:98px;font-family:'Liberation Sans',sans-serif">(X: 219 Y: 1042)</div>
        <div style="flex:1">左键或Shift+左键指定起点(可选择纵筋中心点);按右键中止或ESC键取消;<svg width="10" height="10" viewBox="0 0 10 10"><path d="M8 1h1v1H8zM5 4h1v1H5zM8 4h1v1H8zM2 7h1v1H2zM5 7h1v1H5zM8 7h1v1H8z" fill="#888"/></svg></div>
    </div>
`, function (root) {
    root.querySelectorAll('gl-icon[name="end"]').forEach((i) => {
        i.shadowRoot.querySelector('svg').setAttribute('viewBox', '0 0 20 16');
    });
});

define('gl-canvas', `
    :host{display:block;position:relative;width:921px;height:395px;border:2px solid #f00;box-sizing:border-box;background:#141720;flex:none;overflow:hidden}
    svg{display:block}
    .in{position:absolute;top:28px;width:60px;height:19px;box-sizing:border-box;border:1px solid #666;font:12px/17px "Liberation Mono",monospace;padding-left:1px;letter-spacing:-.4px}
    .in.a{left:691px;background:#16145c;color:#bcc4e6}
    .in.b{left:756px;background:#fff}
    .in.b span{background:#0078d7;color:#fff;display:inline-block;line-height:14px;padding:0 1px}
`, `
    <svg xmlns="http://www.w3.org/2000/svg" width="917" height="391" viewBox="413 246 917 391"></svg>
    <div class="in a">219.45</div><div class="in b"><span>1041.784</span></div>
`, function (root) {
    let svg = '';
    const line = (x1, y1, x2, y2, c, w, d) => {
        svg += `<line x1="${x1}" y1="${y1}" x2="${x2}" y2="${y2}" stroke="${c}" stroke-width="${w || 1}"${d ? ` stroke-dasharray="${d}"` : ''}/>`;
    };
    const rect = (x, y, w, h, c) => {
        svg += `<rect x="${x}" y="${y}" width="${w}" height="${h}" fill="${c}"/>`;
    };
    const grid = (x1, y1, x2, y2) => {
        line(x1, y1, x2, y2, '#343a44');
        line(x1, y1, x2, y2, '#000', 1, '3 21 2 30');
    };
    const dash = (x1, y1, x2, y2) => line(x1, y1, x2, y2, '#a8cdf0', 1, '4 4');
    const text = (x, y, c, s, t) => {
        svg += `<text x="${x}" y="${y}" fill="${c}" font-size="${s}" font-family="Noto Sans CJK SC, sans-serif">${t}</text>`;
    };
    const GREEN = '#7fbf60', WHITE = '#f2f2f2', RED = '#cc1a1f';

    // reference grid
    grid(414, 426.5, 1330, 426.5);
    grid(835, 461.5, 1330, 461.5);
    grid(414, 514.5, 835, 514.5);
    grid(414, 539.5, 1330, 539.5);
    grid(835.5, 390, 835.5, 545);
    grid(1010.5, 391, 1010.5, 545);
    grid(1016, 391.5, 1330, 391.5);

    // dimension text
    text(594, 541, '#3d434e', 12, '2600');
    text(908, 541, '#3d434e', 12, '1000');

    // outline of the section
    line(413, 391.5, 1010.500, 391.5, WHITE);
    line(1010.5, 391, 1010.5, 426.5, WHITE);
    line(1010, 426.5, 1330, 426.5, WHITE);
    line(413, 461.5, 835.5, 461.5, WHITE);
    line(835.5, 461, 835.5, 514.5, WHITE);
    line(835, 514.5, 1330, 514.5, WHITE);

    // centre lines
    dash(416, 433.5, 871, 433.5);
    dash(1006, 455.5, 1330, 455.5);
    dash(1005.5, 392, 1005.5, 514);
    dash(842.5, 391, 842.5, 400);
    dash(842.5, 505, 842.5, 515);

    // dimensions
    line(413, 384.5, 1010, 384.5, GREEN);
    line(413, 468.5, 836, 468.5, GREEN);
    line(1010, 419.5, 1330, 419.5, GREEN);
    line(835, 521.5, 1330, 521.5, GREEN);
    line(828.5, 461, 828.5, 514.5, GREEN);
    line(1017.5, 391, 1017.5, 426.5, GREEN);
    [[1010, 384], [836, 468], [828, 461], [828, 514], [1017, 391], [1017, 426], [1010, 419], [835, 521]].forEach((p) => {
        line(p[0] - 2, p[1] + 2, p[0] + 2, p[1] - 2, GREEN);
    });

    // leader and its note
    line(1012, 388, 1027, 357, '#8a8a8a', 1, '2 2');
    text(1028, 357, '#a9a9a9', 6.500, '全部纵筋');
    text(1060, 357, '#14d414', 6.500, '接截面');

    // rebar
    rect(413, 396, 592, 5, RED);
    rect(413, 453, 592, 5, RED);
    rect(871, 431, 459, 5, RED);
    rect(845, 505, 485, 5, RED);
    rect(793, 405, 22, 5, RED);
    rect(815, 404, 23, 5, RED);
    svg += `<path d="M838 404l4 2 3 4v95h-5v-95l-2-1z" fill="${RED}"/>`;
    rect(840, 408, 5, 99, RED);
    rect(916, 401, 2, 104, RED);
    rect(933, 401, 2, 104, RED);

    // ticks on the bars
    for (let x = 419.7; x < 1005; x += 17.07) rect(Math.round(x), 401, 2, 2, '#f5e30a');
    for (let x = 419.7; x < 1005; x += 17.07) rect(Math.round(x), 451, 2, 2, '#f5e30a');
    for (let x = 844.7; x < 1330; x += 17.07) rect(Math.round(x), 503, 2, 2, '#f5e30a');

    // tiny dimension labels
    text(691, 382, '#c9c9c9', 5, '3602');
    text(604, 473, '#59b4ff', 5, '3602');
    text(1017, 410, '#c9c9c9', 5, '300');
    text(822, 488, '#c9c9c9', 5, '300');
    text(1285, 525, '#e8a03c', 5, '3602');

    root.querySelector('svg').innerHTML = svg;
});
</script>
</body>
</html>
